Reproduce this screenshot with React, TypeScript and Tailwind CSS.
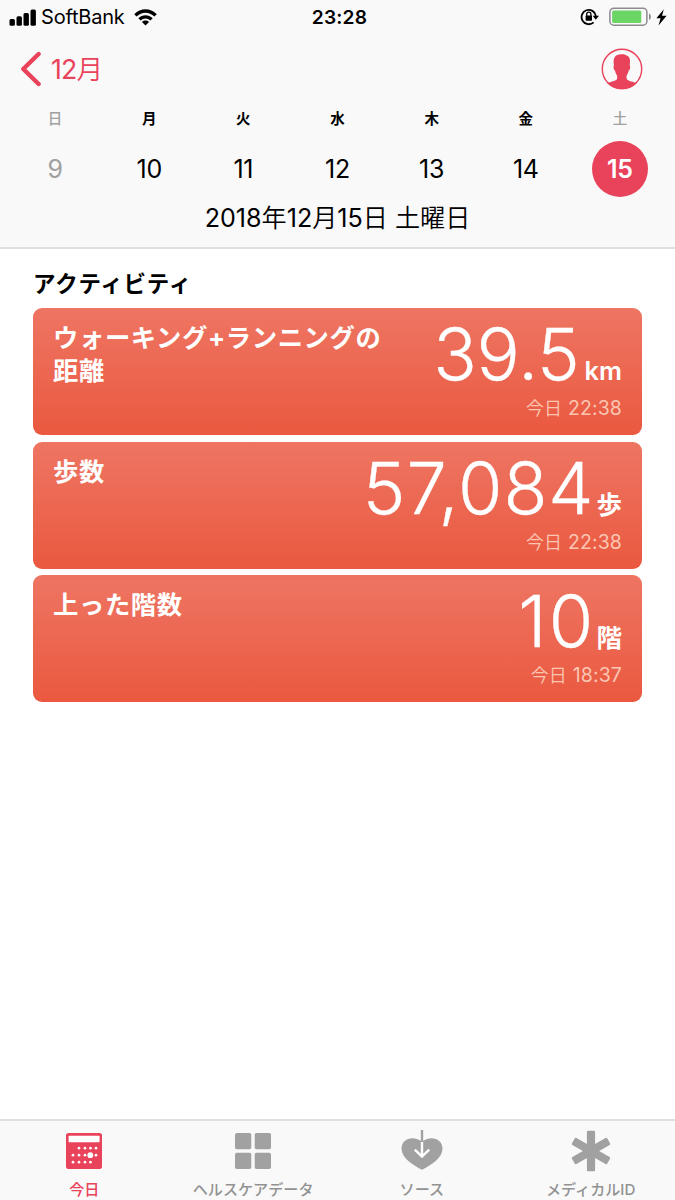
import React from "react";

type Day = { name: string; num: string; weekend?: boolean; selected?: boolean };

const days: Day[] = [
  { name: "日", num: "9", weekend: true },
  { name: "月", num: "10" },
  { name: "火", num: "11" },
  { name: "水", num: "12" },
  { name: "木", num: "13" },
  { name: "金", num: "14" },
  { name: "土", num: "15", weekend: true, selected: true },
];

const cards = [
  { title: "ウォーキング+ランニングの距離", value: "39.5", unit: "km", day: "今日", time: "22:38", tone: "tracking-[-0.2px] mr-[5px]" },
  { title: "歩数", value: "57,084", unit: "歩", day: "今日", time: "22:38", tone: "tracking-[0.9px] mr-[2px]" },
  { title: "上った階数", value: "10", unit: "階", day: "今日", time: "18:37", tone: "tracking-[2.2px] mr-[1px]" },
];

function StatusBar() {
  return (
    <div className="flex h-[34px] items-center justify-between pl-[9px] pr-[8px]">
      <div className="flex w-[250px] items-center">
        <svg width="27" height="17" viewBox="0 0 27 17">
          <rect x="0.5" y="10" width="5.4" height="6.7" rx="1.5" />
          <rect x="7.5" y="7.3" width="5.4" height="9.4" rx="1.5" />
          <rect x="14.5" y="4" width="5.4" height="12.7" rx="1.5" />
          <rect x="21.5" y="0.5" width="5.4" height="16.2" rx="1.5" />
        </svg>
        <span className="ml-[5px] w-[84px] text-[20px] tracking-[-0.2px]">SoftBank</span>
        <svg className="ml-[9px]" width="23" height="17" viewBox="0 0 23 17">
          <path d="M0.2 5.2C6.7-1.3 16.3-1.3 22.8 5.2L20.4 7.6C15.2 2.4 7.8 2.4 2.6 7.6Z" />
          <path d="M4.3 9.2C8.4 5.2 14.6 5.2 18.7 9.2L16.3 11.6C13.5 8.8 9.5 8.8 6.7 11.6Z" />
          <path d="M8 13C10 11.1 13 11.1 15 13L11.5 16.6Z" />
        </svg>
      </div>
      <span className="pt-px pl-[3px] text-[19.2px] font-semibold tracking-[0.2px]">23:28</span>
      <div className="flex w-[250px] items-center justify-end">
        <svg width="19" height="18" viewBox="0 0 19 18">
          <path d="M15.9 8A7.2 7.2 0 1 0 13.6 14.4" fill="none" stroke="#000" strokeWidth="1.8" />
          <path d="M12.6 7.8H19L15.8 11.8Z" />
          <rect x="5.6" y="7.6" width="6.4" height="5.2" rx="0.8" />
          <path d="M6.7 8.5V6.3a2.1 2.1 0 0 1 4.2 0v2.2" fill="none" stroke="#000" strokeWidth="1.3" />
        </svg>
        <svg className="ml-[10px]" width="43" height="20" viewBox="0 0 43 20">
          <rect x="0.9" y="1.2" width="37" height="17" rx="4" fill="none" stroke="#8e8b90" strokeWidth="1.5" />
          <rect x="3.1" y="3.4" width="29.2" height="12.6" rx="1.5" fill="#6bd666" />
          <path d="M40 6.5c2.6 1 2.6 5.6 0 6.6Z" fill="#8e8b90" />
        </svg>
        <svg className="ml-[4px]" width="11" height="17" viewBox="0 0 11 17">
          <path d="M7.8 0.3L0.4 9.2H4.6L2.5 16.6L10.6 6.8H6Z" />
        </svg>
      </div>
    </div>
  );
}

function Header() {
  return (
    <header className="h-[249px] shrink-0 border-b-[2px] border-[#dfdfe0] bg-[#f9f9f9]">
      <StatusBar />
      <div className="flex h-[70px] items-center justify-between pl-[20px] pr-[32px] text-[#e9425b]">
        <div className="flex items-center">
          <svg width="22" height="36" viewBox="0 0 22 36" fill="none" stroke="#e9425b" strokeWidth="4.4" strokeLinecap="round" strokeLinejoin="round">
            <path d="M18.6 3L3.3 18L18.6 33" />
          </svg>
          <span className="ml-[9px] text-[26.7px] tracking-[-0.8px]">
            12<span className="font-[350]">月</span>
          </span>
        </div>
        <svg width="42" height="42" viewBox="0 0 42 42">
          <circle cx="21" cy="21" r="19.7" fill="none" stroke="#e9425b" strokeWidth="1.4" />
          <path
            d="M6.4 35.2C9.5 33.8 14.5 33.3 15.7 31.6C16.4 30.5 16.3 28.7 16 27.5C14.9 26 14.3 24.5 14 22.6C12.7 22.5 12.1 18 13 17.3C11.9 11.5 13.3 8.3 16.3 7.1C18.7 6 23.5 5.8 26 7.7C29.1 9 29.5 12.5 28.7 17.3C29.7 18 29 22.5 27.7 22.6C27.4 24.5 26.8 26 25.7 27.5C25.4 28.7 25.4 30.5 26.1 31.6C27.3 33.3 32.4 33.8 35.6 35.2C32 39 27 41 21 41C15 41 10 39 6.4 35.2Z"
            fill="#e9425b"
          />
        </svg>
      </div>
      <div className="flex px-[8px]">
        {days.map((d) => (
          <div key={d.num} className="flex flex-1 flex-col items-center">
            <span className={"flex h-[28px] items-center pt-px text-[14.5px] " + (d.weekend ? "font-medium text-[#a0a0a0]" : "font-bold")}>
              {d.name}
            </span>
            <span
              className={
                "mt-[9px] flex size-[56px] items-center justify-center rounded-full pt-px text-[25px] tracking-[-0.3px] " +
                (d.selected ? "bg-[#e9425b] font-semibold text-white" : d.weekend ? "text-[#a0a0a0]" : "")
              }
            >
              {d.num}
            </span>
          </div>
        ))}
      </div>
      <div className="flex h-[44px] items-center justify-center whitespace-pre text-[25.1px]">
        2018<span className="font-[350]">年</span>12<span className="font-[350]">月</span>15<span className="font-[350]">日 土曜日</span>
      </div>
    </header>
  );
}

function Card({ title, value, unit, day, time, tone }: (typeof cards)[number]) {
  return (
    <article className="flex h-[127px] justify-between rounded-[9px] bg-linear-to-b from-[#ee7562] to-[#ea583f] pl-[20px] pr-[20px] text-white">
      <h3 className="w-[340px] pt-[13px] text-[25.3px] leading-[33px] font-bold tracking-[0.65px]">{title}</h3>
      <div className="flex flex-col items-end whitespace-nowrap">
        <div className="flex h-[88px] items-baseline">
          <span className={"text-[72px] leading-[92px] font-light [-webkit-text-stroke:0.3px_white] " + tone}>{value}</span>
          <span className="text-[25.5px] font-semibold">{unit}</span>
        </div>
        <span className="flex items-baseline gap-[6px] text-[19.5px] leading-[24px] text-[#fbc6b2]">
          <span className="text-[18px] font-[350]">{day}</span>
          <span className="tracking-[0.1px]">{time}</span>
        </span>
      </div>
    </article>
  );
}

function TodayIcon() {
  const dots = [
    [13, 16], [19, 16], [24.5, 16], [30, 16],
    [7, 23], [13, 23], [19, 23], [30, 23],
    [7, 30], [13, 30], [19, 30], [24.5, 30],
  ];
  return (
    <svg width="36" height="36" viewBox="0 0 36 36">
      <rect width="36" height="36" rx="2.5" fill="#e9425b" />
      <rect x="2.6" y="2.8" width="31" height="6.5" rx="0.8" fill="#fff" />
      {dots.map(([x, y]) => (
        <circle key={`${x}-${y}`} cx={x} cy={y - 0.8} r="1.35" fill="#fff" />
      ))}
      <circle cx="24.3" cy="22.2" r="2.9" fill="#fff" />
    </svg>
  );
}

function DataIcon() {
  return (
    <svg width="36" height="36" viewBox="0 0 36 36" fill="#a1a1a1">
      <rect width="16.3" height="16.3" rx="1.8" />
      <rect x="19.7" width="16.3" height="16.3" rx="1.8" />
      <rect y="19.7" width="16.3" height="16.3" rx="1.8" />
      <rect x="19.7" y="19.7" width="16.3" height="16.3" rx="1.8" />
    </svg>
  );
}

function SourceIcon() {
  return (
    <svg width="42" height="42" viewBox="0 0 42 42">
      <path d="M21 39.700C12 35.300 0.500 28 0.500 18.500C0.500 8 13.500 5 21 12C28.500 5 41.500 8 41.500 18.500C41.500 28 30 35.300 21 39.700Z" fill="#a1a1a1" />
      <path d="M21 0V12" stroke="#a1a1a1" strokeWidth="2.4" fill="none" />
      <path d="M21 12V26.500M13.800 19.700L21 26.700L28.200 19.700" stroke="#fff" strokeWidth="2.4" fill="none" />
    </svg>
  );
}

function MedicalIcon() {
  return (
    <svg width="40" height="42" viewBox="0 0 40 42" fill="#a1a1a1">
      {[0, 60, 120].map((a) => (
        <rect key={a} x="15.9" y="0.7" width="8.2" height="40.6" rx="1.2" transform={`rotate(${a} 20 21)`} />
      ))}
    </svg>
  );
}

const tabs = [
  { label: "今日", icon: <TodayIcon />, active: true },
  { label: "ヘルスケアデータ", icon: <DataIcon /> },
  { label: "ソース", icon: <SourceIcon /> },
  { label: "メディカルID", icon: <MedicalIcon /> },
];

export default function App() {
  return (
    <div className="flex h-[1200px] w-[675px] flex-col overflow-hidden bg-white font-['Inter','Noto_Sans_CJK_JP',sans-serif] text-black" lang="ja">
      <Header />
      <main className="flex-1 px-[33px] pt-[18px]">
        <h2 className="h-[41px] text-[22.5px] leading-[34px] font-bold tracking-[0.75px]">アクティビティ</h2>
        <div className="flex flex-col gap-[6.7px]">
          {cards.map((c) => (
            <Card key={c.title} {...c} />
          ))}
        </div>
      </main>
      <nav className="flex h-[81px] shrink-0 border-t-[2px] border-[#dfdfe0] bg-[#f9f9f9]">
        {tabs.map((t) => (
          <div key={t.label} className="flex flex-1 flex-col items-center pt-[9px]">
            <div className="flex h-[42px] shrink-0 items-center">{t.icon}</div>
            <span className={"mt-[8px] text-[15.1px] leading-[20px] font-medium whitespace-nowrap " + (t.active ? "text-[#e9425b]" : "text-[#929292]")}>
              {t.label}
            </span>
          </div>
        ))}
      </nav>
    </div>
  );
}
